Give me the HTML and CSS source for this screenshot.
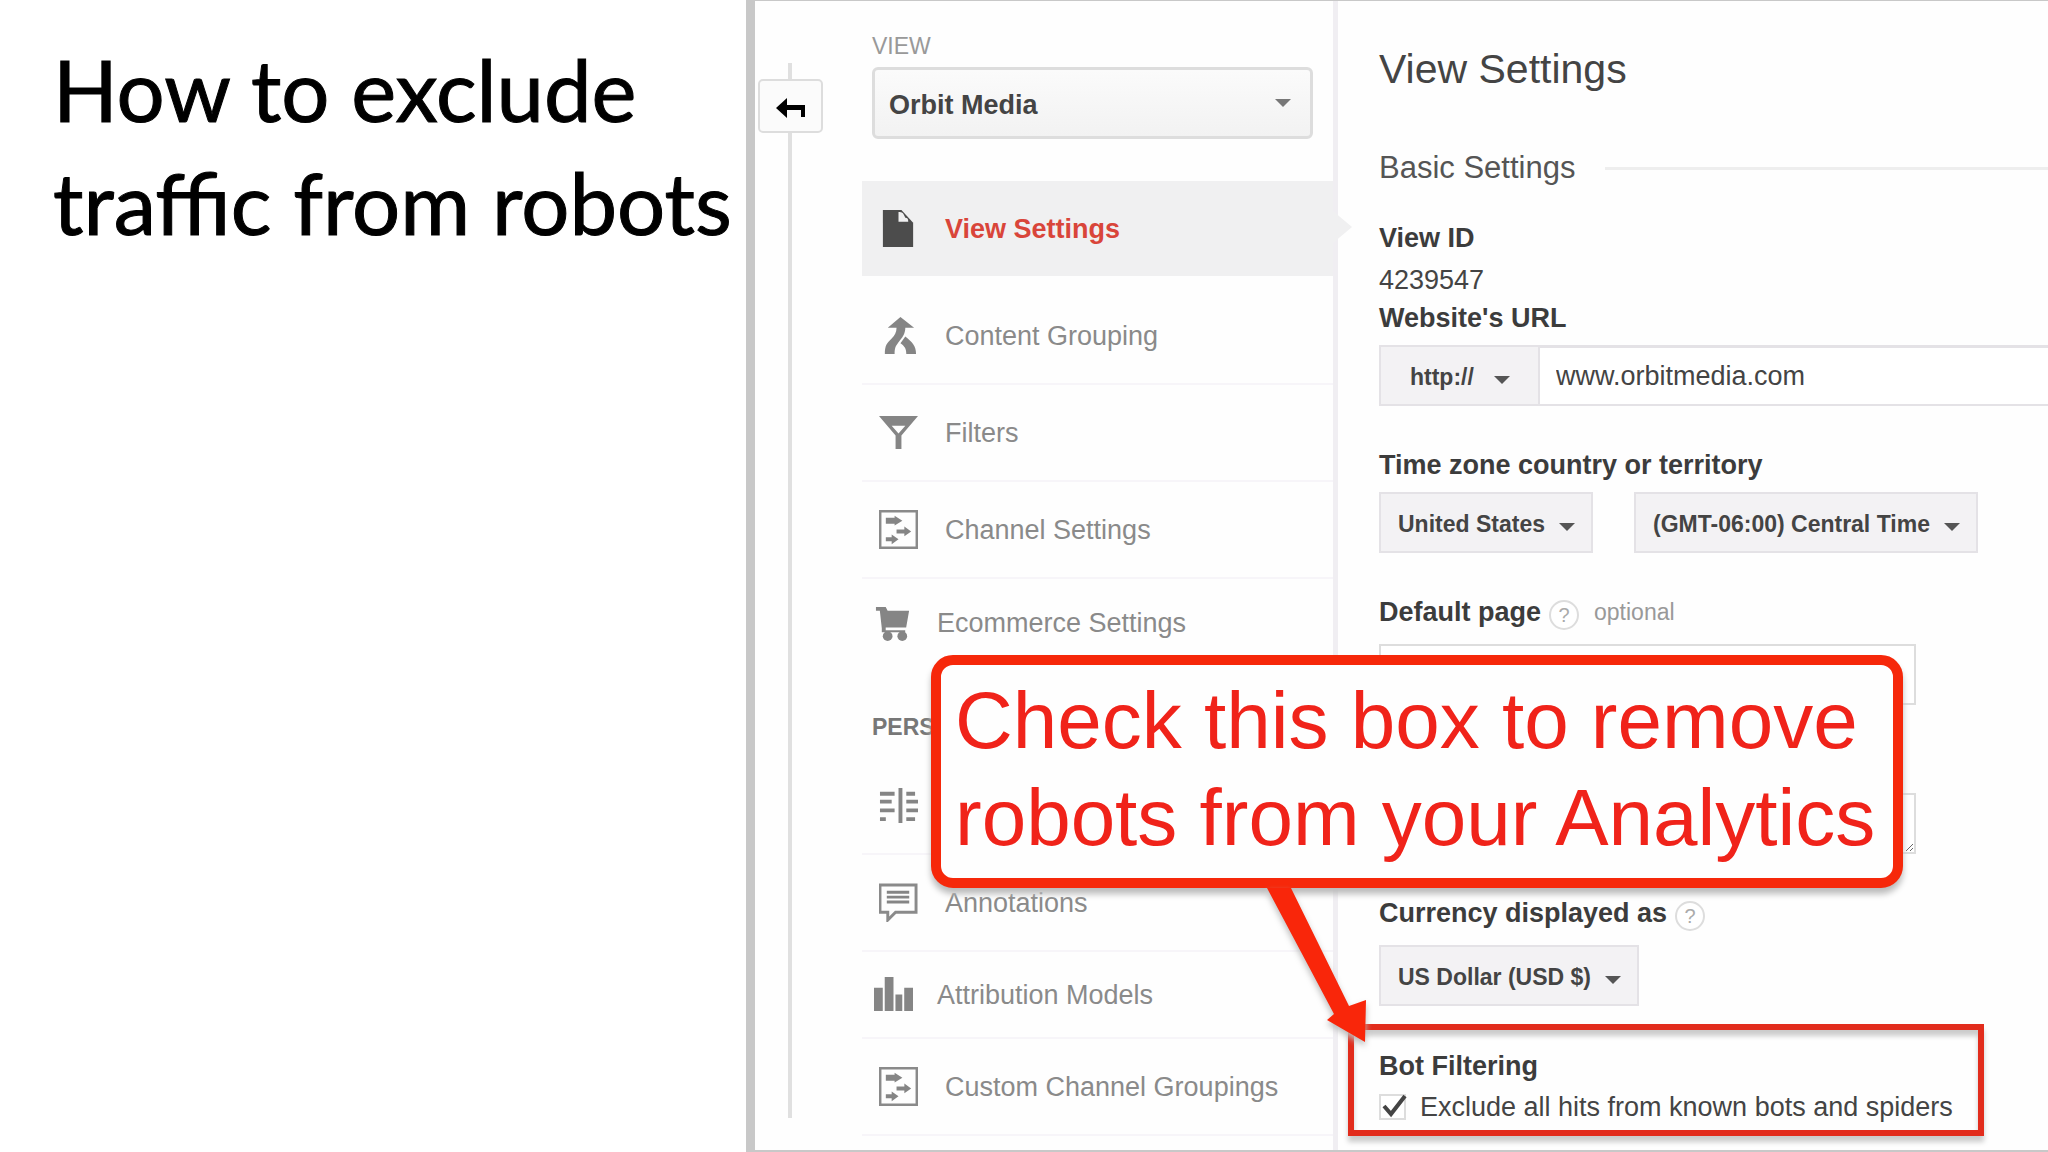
FILE: index.html
```html
<!DOCTYPE html>
<html lang="en">
    <head>
        <meta charset="UTF-8" />
        <meta name="viewport" content="width=device-width, initial-scale=1.0" />
        <title>How to exclude traffic from robots</title>
        <link rel="stylesheet" href="styles.css">
    </head>
    <body>
        <header>
            <h1>How to exclude traffic from robots</h1>
        </header>

        <main>
            <div class="rail">
                <button class="back" type="button" aria-label="Back">
                    <svg width="30" height="22" viewBox="0 0 30 22"><path d="M0 11L11 1v7h18v12h-4v-7H11v8z" /></svg>
                </button>
            </div>

            <!-- menu -->
            <nav>
                <label class="viewLabel" for="view">VIEW</label>
                <div class="drop viewDrop">
                    <select id="view"><option>Orbit Media</option></select>
                </div>
                <a class="item active" href="#settings">
                    <svg class="icon" viewBox="0 0 40 40"><path d="M4 1h19l12 13v25H4z" /><path class="fold" d="M20 3v10h10c0-3-1-4-3-4-2-5-3-6-7-6z" /></svg>
                    View Settings
                </a>
                <a class="item" href="#grouping">
                    <svg class="icon" viewBox="0 0 40 40"><path d="M22 1L36 12h-9c0 6-3 10-7 15-3 4-4 6-4 12H6c0-9 2-11 7-16 3-3 5-6 5-11H9z" /><path d="M27 21c7 6 11 9 11 18H28c0-6-2-8-6-11z" /></svg>
                    Content Grouping
                </a>
                <a class="item" href="#filters">
                    <svg class="icon" viewBox="0 0 40 40"><path fill-rule="evenodd" d="M0 3h40L23 23v14h-6V23zM13 13l7 8 7-8z" /></svg>
                    Filters
                </a>
                <a class="item" href="#channel">
                    <svg class="icon" viewBox="0 0 40 40"><path class="line" d="M1 1h38v38H1z" /><path d="M7 8h9V6l8 5-8 5v-2H7zM18 20h8v-3l7 5-7 5v-3h-8zM7 28h6v-3l7 5-7 5v-3H7z" /></svg>
                    Channel Settings
                </a>
                <a class="item compact last" href="#ecommerce">
                    <svg class="icon" viewBox="0 0 40 40"><path d="M2 4h10l2 4h22l-3 17H12v3h20v2H8v-4L6 8H2z" /><circle cx="14" cy="34" r="5" /><circle cx="29" cy="34" r="5" /></svg>
                    Ecommerce Settings
                </a>
                <h3>PERS</h3>
                <a class="item" href="#segments" aria-label="Segments">
                    <svg class="icon" viewBox="0 0 40 40"><path d="M20 2h4v36h-4zM1 6h15v4H1zM1 14h12v4H1zM1 23h15v4H1zM1 32h6v4H1zM28 6h9v4h-9zM28 14h12v4H28zM28 23h12v4H28zM28 32h9v4h-9z" /></svg>
                </a>
                <a class="item" href="#annotations">
                    <svg class="icon" viewBox="0 0 40 40"><path class="line" d="M1 2h37v28H17l-8 8v-8H1z" /><path d="M8 8h23v3H8zM8 13h23v3H8zM8 18h23v3H8z" /></svg>
                    Annotations
                </a>
                <a class="item compact" href="#attribution">
                    <svg class="icon" viewBox="0 0 40 40"><path d="M0 13h9v24H0zM11 2h9v35h-9zM22 20h7v17h-7zM31 13h9v24h-9z" /></svg>
                    Attribution Models
                </a>
                <a class="item" href="#custom">
                    <svg class="icon" viewBox="0 0 40 40"><path class="line" d="M1 1h38v38H1z" /><path d="M7 8h9V6l8 5-8 5v-2H7zM18 20h8v-3l7 5-7 5v-3h-8zM7 28h6v-3l7 5-7 5v-3H7z" /></svg>
                    Custom Channel Groupings
                </a>
            </nav>

            <!-- settings -->
            <form id="settings">
                <h2>View Settings</h2>
                <h4>Basic Settings</h4>
                <div class="label">View ID</div>
                <div class="viewId">4239547</div>
                <div class="field">
                    <label class="label" for="url">Website's URL</label>
                    <div class="url">
                        <div class="drop protocol">
                            <select aria-label="Protocol"><option>http://</option></select>
                        </div>
                        <input id="url" type="text" value="www.orbitmedia.com">
                    </div>
                </div>
                <div class="field">
                    <label class="label" for="country">Time zone country or territory</label>
                    <div class="row">
                        <div class="drop">
                            <select id="country"><option>United States</option></select>
                        </div>
                        <div class="drop">
                            <select aria-label="Time zone"><option>(GMT-06:00) Central Time</option></select>
                        </div>
                    </div>
                </div>
                <div class="field spaced">
                    <div class="caption">
                        <label class="label" for="page">Default page</label>
                        <button class="help" type="button">?</button>
                        <span class="optional">optional</span>
                    </div>
                    <input id="page" class="box" type="text">
                </div>
                <div class="field query">
                    <textarea class="box" aria-label="Query parameters"></textarea>
                </div>
                <div class="field spaced">
                    <div class="caption">
                        <label class="label" for="currency">Currency displayed as</label>
                        <button class="help" type="button">?</button>
                    </div>
                    <div class="row">
                        <div class="drop">
                            <select id="currency"><option>US Dollar (USD $)</option></select>
                        </div>
                    </div>
                </div>
                <div class="bots">
                    <div class="label">Bot Filtering</div>
                    <label class="check">
                        <input type="checkbox" checked>
                        <svg class="tick" viewBox="0 0 28 26"><path d="M5 12l7 8L26 2" /></svg>
                        Exclude all hits from known bots and spiders
                    </label>
                </div>
            </form>

            <!-- callout over the settings -->
            <p class="callout">Check this box to remove<br>robots from your Analytics</p>
            <svg class="arrow" width="120" height="170" viewBox="0 0 120 170"><path d="M14 6H38L96 124L113 118L112 160L74 138L81 132z" /></svg>
        </main>
    </body>
</html>
```

FILE: styles.css
```css
* {
    margin: 0;
    padding: 0;
    box-sizing: border-box;
}
body {
    display: flex;
    min-height: 100vh;
    overflow-x: hidden;
    font-family: "Liberation Sans", Arial, sans-serif;
    font-size: 27px;
    line-height: 32px;
    background-color: #fff;
    color: #444;
}
header {
    flex: 0 0 746px;
    padding: 33px 0 0 53px;
}
h1 {
    font-family: Lato, sans-serif;
    font-size: 85px;
    font-weight: 400;
    line-height: 113px;
    color: #000;
    -webkit-text-stroke: 1px #000;
}
main {
    position: relative;
    display: flex;
    flex: 1;
    min-width: 0;
    border: solid #c8c8c8;
    border-width: 1px 0 2px 9px;
    background-color: #fefefe;
}
select,
input,
textarea,
button {
    font: inherit;
    color: inherit;
}
.rail {
    width: 71px;
    margin: 62px 0 32px;
    padding: 16px 0 0 3px;
    background: linear-gradient(#e0e0e0, #e0e0e0) 33px 0 / 4px 100% no-repeat;
}
.back {
    display: flex;
    align-items: center;
    justify-content: center;
    width: 65px;
    height: 54px;
    padding-top: 4px;
    border: 2px solid #ddd;
    border-radius: 5px;
    background-color: #fbfbfb;
}
nav {
    width: 512px;
    padding: 29px 0 10px 36px;
    border-right: 5px solid #f0eef2;
}
.viewLabel {
    display: block;
    margin-left: 10px;
    font-size: 23px;
    color: #999;
}
.drop {
    position: relative;
}
.drop select {
    display: block;
    height: 61px;
    padding: 2px 46px 0 17px;
    border: 2px solid #e4e2e6;
    border-radius: 0;
    appearance: none;
    background-color: #f3f2f4;
    font-size: 23px;
    font-weight: bold;
}
.drop::after {
    content: "";
    position: absolute;
    top: 50%;
    right: 18px;
    border: solid transparent;
    border-width: 8px 8px 0;
    border-top-color: #555;
}
.viewDrop {
    margin: 5px 20px 42px 10px;
}
.viewDrop select {
    width: 100%;
    height: 72px;
    padding: 4px 40px 0 14px;
    border: 3px solid #ddd;
    border-radius: 6px;
    background: linear-gradient(#fbfbfb, #f2f2f2);
    font-size: 27px;
}
.viewDrop::after {
    top: 32px;
    right: 22px;
    border-top-color: #777;
}
.item {
    display: flex;
    align-items: center;
    gap: 27px;
    height: 97px;
    padding-left: 17px;
    border-bottom: 2px solid #f7f5f9;
    color: #8a8a8a;
    text-decoration: none;
    white-space: nowrap;
}
.compact {
    height: 87px;
    padding-left: 12px;
    gap: 24px;
}
.active {
    position: relative;
    height: 95px;
    margin-bottom: 12px;
    border: 0;
    background-color: #f0f0f1;
    font-weight: bold;
    color: #d9453a;
}
.active::after {
    content: "";
    position: absolute;
    top: 30px;
    right: -19px;
    border: solid transparent;
    border-width: 16px 0 16px 19px;
    border-left-color: #f0f0f1;
}
.last {
    border-bottom: 0;
}
.icon {
    width: 39px;
    height: 39px;
    fill: #858585;
}
.active .icon {
    fill: #4c4c4c;
}
.icon .fold {
    fill: #f0f0f1;
}
.icon .line {
    fill: none;
    stroke: #8a8a8a;
    stroke-width: 3;
}
h3 {
    padding: 45px 0 15px 10px;
    font-size: 23px;
    color: #777;
}
form {
    flex: 1;
    min-width: 0;
    padding: 44px 0 13px 41px;
}
h2 {
    margin-bottom: 57px;
    font-size: 41px;
    font-weight: 400;
    line-height: 48px;
}
h4 {
    display: flex;
    align-items: center;
    gap: 30px;
    margin-bottom: 36px;
    font-size: 31px;
    font-weight: 400;
    line-height: 36px;
    color: #555;
}
h4::after {
    content: "";
    flex: 1;
    height: 3px;
    background-color: #eee;
}
.label {
    display: block;
    font-weight: bold;
    color: #3c3c3c;
}
.viewId {
    padding: 10px 0 6px;
}
.field {
    display: flex;
    flex-direction: column;
    gap: 11px;
    margin-bottom: 43px;
}
.spaced {
    gap: 16px;
}
.query {
    padding-top: 45px;
}
.row {
    display: flex;
    gap: 41px;
}
.url {
    display: flex;
}
.url .protocol select {
    width: 161px;
    padding-left: 29px;
}
.protocol::after {
    right: 30px;
}
.url input {
    flex: 1;
    min-width: 0;
    padding-left: 16px;
    border: solid #e4e2e6;
    border-width: 3px 0 2px;
    background-color: #fff;
}
.caption {
    display: flex;
    align-items: center;
    height: 32px;
}
.help {
    width: 30px;
    height: 30px;
    margin: 6px 15px 0 8px;
    border: 2px solid #ddd;
    border-radius: 50%;
    background-color: #fff;
    font-size: 20px;
    line-height: 26px;
    color: #aaa;
}
.optional {
    font-size: 23px;
    color: #999;
}
.box {
    width: 537px;
    height: 61px;
    border: 2px solid #ddd;
    background-color: #fff;
}
.bots {
    position: relative;
    width: 636px;
    margin: -25px 0 0 -31px;
    padding: 20px 0 7px 25px;
    border: 6px solid #e22c1c;
    box-shadow: 0 6px 5px #ccc, inset 0 6px 5px #ccc;
}
.check {
    position: relative;
    display: flex;
    align-items: center;
    gap: 14px;
    margin-top: 9px;
    white-space: nowrap;
}
.check input {
    width: 27px;
    height: 26px;
    border: 2px solid #ddd;
    appearance: none;
    background-color: #fff;
}
.tick {
    position: absolute;
    left: 0;
    width: 28px;
    height: 26px;
    fill: none;
    stroke: #444;
    stroke-width: 4;
}
.check input:not(:checked) + .tick {
    display: none;
}
.callout {
    position: absolute;
    top: 654px;
    left: 176px;
    padding: 7px 18px 12px 14px;
    border: 10px solid #f6280a;
    border-radius: 22px;
    background-color: #fefefe;
    box-shadow: 0 6px 6px #bbb;
    font-size: 80px;
    line-height: 97px;
    color: #f0231a;
    white-space: nowrap;
}
.arrow {
    position: absolute;
    top: 881px;
    left: 498px;
    fill: #f9260a;
    filter: drop-shadow(0 4px 3px #bbb);
}
```
